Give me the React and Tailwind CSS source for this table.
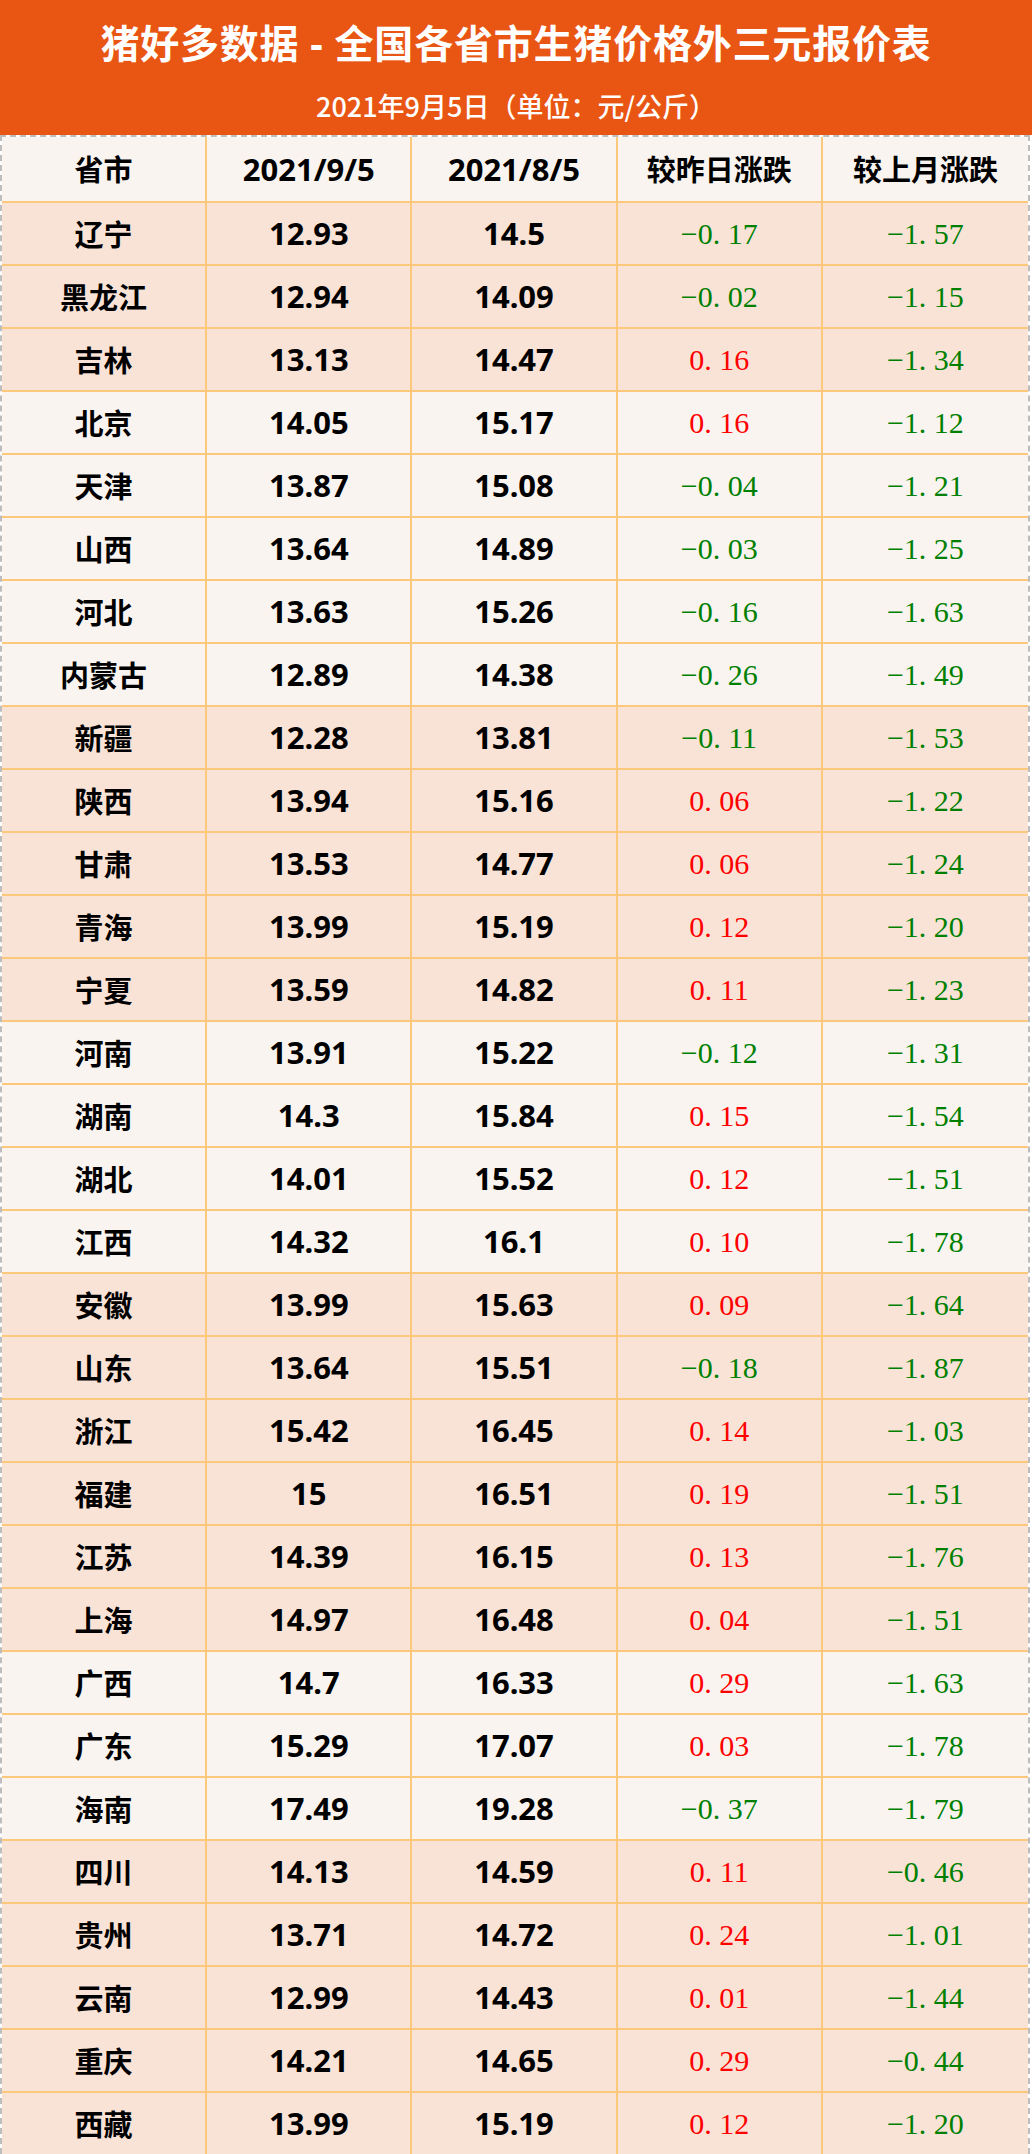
import React from 'react';

// region groups alternate between peach and light rows
const rows = [
  ['辽宁', '12.93', '14.5', '-0.17', '-1.57', 1],
  ['黑龙江', '12.94', '14.09', '-0.02', '-1.15', 1],
  ['吉林', '13.13', '14.47', '0.16', '-1.34', 1],
  ['北京', '14.05', '15.17', '0.16', '-1.12', 0],
  ['天津', '13.87', '15.08', '-0.04', '-1.21', 0],
  ['山西', '13.64', '14.89', '-0.03', '-1.25', 0],
  ['河北', '13.63', '15.26', '-0.16', '-1.63', 0],
  ['内蒙古', '12.89', '14.38', '-0.26', '-1.49', 0],
  ['新疆', '12.28', '13.81', '-0.11', '-1.53', 1],
  ['陕西', '13.94', '15.16', '0.06', '-1.22', 1],
  ['甘肃', '13.53', '14.77', '0.06', '-1.24', 1],
  ['青海', '13.99', '15.19', '0.12', '-1.20', 1],
  ['宁夏', '13.59', '14.82', '0.11', '-1.23', 1],
  ['河南', '13.91', '15.22', '-0.12', '-1.31', 0],
  ['湖南', '14.3', '15.84', '0.15', '-1.54', 0],
  ['湖北', '14.01', '15.52', '0.12', '-1.51', 0],
  ['江西', '14.32', '16.1', '0.10', '-1.78', 0],
  ['安徽', '13.99', '15.63', '0.09', '-1.64', 1],
  ['山东', '13.64', '15.51', '-0.18', '-1.87', 1],
  ['浙江', '15.42', '16.45', '0.14', '-1.03', 1],
  ['福建', '15', '16.51', '0.19', '-1.51', 1],
  ['江苏', '14.39', '16.15', '0.13', '-1.76', 1],
  ['上海', '14.97', '16.48', '0.04', '-1.51', 1],
  ['广西', '14.7', '16.33', '0.29', '-1.63', 0],
  ['广东', '15.29', '17.07', '0.03', '-1.78', 0],
  ['海南', '17.49', '19.28', '-0.37', '-1.79', 0],
  ['四川', '14.13', '14.59', '0.11', '-0.46', 1],
  ['贵州', '13.71', '14.72', '0.24', '-1.01', 1],
  ['云南', '12.99', '14.43', '0.01', '-1.44', 1],
  ['重庆', '14.21', '14.65', '0.29', '-0.44', 1],
  ['西藏', '13.99', '15.19', '0.12', '-1.20', 1],
];

const sans = "font-['Noto_Sans','Noto_Sans_CJK_SC',sans-serif]";

// SimSun-style change value: "−0. 17"
const Change = ({ value }) => {
  const neg = value.startsWith('-');
  const text = (neg ? '−' : '') + value.replace('-', '').replace('.', '. ');
  return (
    <span className={`font-['Liberation_Serif',serif] text-[30px] ${neg ? 'text-[#008000]' : 'text-[#ff0000]'}`}>
      {text}
    </span>
  );
};

const Cell = ({ children, last }) => (
  <div className={`flex items-center justify-center ${last ? '' : 'border-r-2 border-[#fcc97c]'}`}>
    {children}
  </div>
);

export default function App() {
  return (
    <div className={`w-[1032px] h-[2154px] flex flex-col bg-white ${sans}`}>
      <div className="h-[135px] bg-[#e95513] text-white flex flex-col items-center">
        <div className="mt-[19px] text-[39px] font-bold leading-[48px] tracking-[0.8px]">
          猪好多数据 - 全国各省市生猪价格外三元报价表
        </div>
        <div className="mt-[22px] text-[27px] font-medium leading-[34px] font-['Noto_Sans_CJK_SC',sans-serif]">
          2021年9月5日（单位：元/公斤）
        </div>
      </div>
      <div className="w-[1030px] flex-1 grid grid-rows-[64px_repeat(31,1fr)] border-x-2 border-t-2 border-dashed border-[#bdbdbd]">
        <div className="grid grid-cols-5 bg-[#f9f4f0] text-black font-bold text-[29px]">
          <Cell><span className="font-['Noto_Sans_CJK_SC',sans-serif]">省市</span></Cell>
          <Cell><span className="text-[31px]">2021/9/5</span></Cell>
          <Cell><span className="text-[31px]">2021/8/5</span></Cell>
          <Cell><span className="font-['Noto_Sans_CJK_SC',sans-serif]">较昨日涨跌</span></Cell>
          <Cell last><span className="font-['Noto_Sans_CJK_SC',sans-serif]">较上月涨跌</span></Cell>
        </div>
        {rows.map(([name, a, b, d, m, peach]) => (
          <div
            key={name}
            className={`grid grid-cols-5 border-t-2 border-[#fcc97c] ${peach ? 'bg-[#f9e3d7]' : 'bg-[#f9f4f0]'}`}
          >
            <Cell><span className="text-[29px] font-bold font-['Noto_Sans_CJK_SC',sans-serif]">{name}</span></Cell>
            <Cell><span className="text-[31px] font-bold">{a}</span></Cell>
            <Cell><span className="text-[31px] font-bold">{b}</span></Cell>
            <Cell><Change value={d} /></Cell>
            <Cell last><Change value={m} /></Cell>
          </div>
        ))}
      </div>
    </div>
  );
}
